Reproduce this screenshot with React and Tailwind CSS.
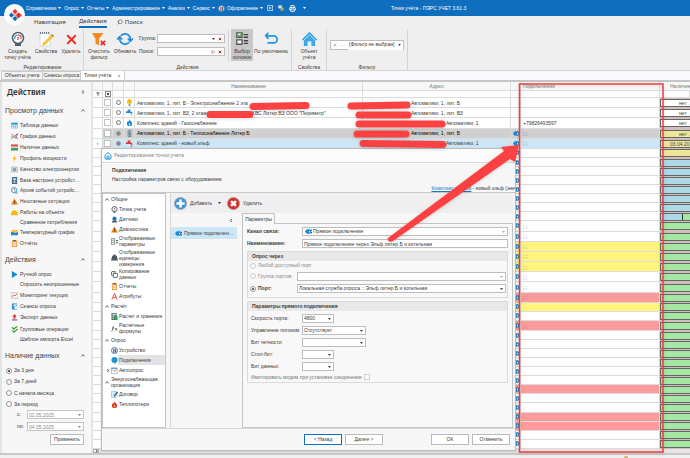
import { Home, Search, Pin, X, RefreshCw, Printer, Filter, Copy } from "lucide-react";

const MENU = ["Справочники", "Опрос", "Отчеты", "Администрирование", "Анализ", "Сервис"];

const DATA_VIEWS = [
  ["table", "Таблица данных"],
  ["graph", "График данных"],
  ["avail", "Наличие данных"],
  ["bolt", "Профиль мощности"],
  ["quality", "Качество электроэнергии"],
  ["device", "База настроек устройст…"],
  ["clock", "Архив событий устройс…"],
  ["warn", "Нештатные ситуации"],
  ["helmet", "Работы на объекте"],
  [null, "Сравнение потребления"],
  ["temp", "Температурный график"],
  ["report", "Отчёты"],
];

const ACTIONS = [
  ["play", "Ручной опрос"],
  [null, "Опросить неопрошенные"],
  ["monitor", "Мониторинг текущих"],
  ["book", "Сеансы опроса"],
  ["export", "Экспорт данных"],
  ["checks", "Групповые операции"],
  [null, "Шаблон импорта Excel"],
];

const PERIODS = ["За 3 дня", "За 7 дней", "С начала месяца", "За период"];

const TREE = [
  { title: "Общие" },
  { icon: "meter", label: "Точка учета" },
  { icon: "sensor", label: "Датчики" },
  { icon: "warn", label: "Диагностика" },
  { icon: "params", label: "Отображаемые параметры", lines: 2 },
  { icon: "weight", label: "Отображаемые единицы измерения", lines: 3 },
  { icon: "copy", label: "Копирование данных", lines: 2 },
  { icon: "report", label: "Отчеты" },
  { icon: "attr", label: "Атрибуты" },
  { title: "Расчёт" },
  { icon: "calc", label: "Расчет и хранение" },
  { icon: "fx", label: "Расчётные формулы", lines: 2 },
  { title: "Опрос" },
  { icon: "gauge", label: "Устройство" },
  { icon: "globe", label: "Подключения", active: true },
  { icon: "auto", label: "Автоопрос", nested: true },
  { title: "Энергоснабжающая организация", lines: 2 },
  { icon: "contract", label: "Договор" },
  { icon: "fire", label: "Теплопотери" },
];

const POINTS = [
  { icon: "bulb", name: "Автоматики, 1, лит. Б - Электроснабжение 2 эта", address: "Автоматики, 1, лит. Б" },
  { icon: "tapBlue", name: "Автоматики, 1, лит. ВЗ, 2 этаж", rest: "ХВС Литер ВЗ ООО \"Периметр\"", address: "Автоматики, 1, лит. ВЗ" },
  { icon: "gas", name: "Комплекс зданий - Газоснабжение", address: "Автоматики, 1", far: true, link: "+79826493597" },
  { icon: "heat", name: "Автоматики, 1, лит. Б - Теплоснабжение Литер Б", address: "Автоматики, 1, лит. Б", link: "; ;", tone: "gray" },
  { icon: "tapRed", name: "Комплекс зданий - новый эльф", address: "Автоматики, 1", far: true, link: "; ;", tone: "blue" },
];

// rows behind the dialog, only their right columns are visible
const HIDDEN_TONES = {
  16: "yellow", 17: "yellow", 18: "yellow", 21: "red", 22: "yellow", 24: "red", 31: "red", 34: "red", 35: "red",
};
const HIDDEN_LINKS = [14, 15, 16, 17, 18, 19, 20, 21, 24];

const ROWS = Array.from({ length: 37 }, (_, i) => {
  const n = i + 1;
  return { n, ...(POINTS[i] || { tone: HIDDEN_TONES[n], link: HIDDEN_LINKS.includes(n) ? "; ;" : "" }) };
});

const TONES = {
  gray: "bg-[#d0d0d0] text-black",
  blue: "bg-[#cce6f6]",
  yellow: "bg-[#fff57d]",
  red: "bg-[#ff9b9b]",
};

function availTone(n) {
  if (n <= 3) return "bg-white";
  if (n <= 6) return "bg-[#eee79a]";
  if (n <= 13) return "bg-[#acd8e8]";
  return "bg-[#a4e8a4]";
}

const GLYPHS = {
  table: <><path fill="#eaf5fc" stroke="#4a9fd4" d="M1 2h14v12H1z" /><path fill="#2196dc" d="M1 2h14v4H1z" /><path stroke="#4a9fd4" d="M1 10h14M6 6v8M10.500 6v8" /></>,
  graph: <><path fill="none" stroke="#e0392e" strokeWidth="2" d="M1 2l6 6 3-3 5 9" /><path fill="none" stroke="#2a8fd0" strokeWidth="2" d="M1 14l5-6 4 4 5-10" /><circle cx="2" cy="8" r="2" fill="#f0a020" /><circle cx="14" cy="3" r="2" fill="#e0392e" /></>,
  avail: <><path fill="#e04848" d="M0 1h16v5H0z" /><path fill="#f3c6c6" d="M0 6h16v3H0z" /><path fill="#3ba55b" d="M0 9h16v6H0z" /></>,
  bolt: <path fill="#fbb914" d="M10 0L3 9h4l-2 7 8-10H9z" />,
  quality: <><path fill="#cfe3ea" stroke="#8aa" d="M1 2h14v12H1z" /><circle cx="8" cy="8" r="4" fill="#63a1b9" /><path stroke="#e6a33c" strokeWidth="2" d="M3 12l9-8" /></>,
  device: <><path fill="#48708d" d="M2 0h12v16H2z" /><path fill="#d8edf7" d="M5 3h6v4H5z" /><circle cx="8" cy="11" r="2" fill="#fff" /></>,
  clock: <><circle cx="7" cy="7" r="6" fill="#e3f3fb" stroke="#2c9ad6" strokeWidth="2" /><path fill="none" stroke="#e0392e" strokeWidth="1.500" d="M7 3v4h3" /><path fill="#6ab4dc" d="M9 10h6v5H9z" /></>,
  warn: <><path fill="#f08019" d="M8 1l8 14H0z" /><path stroke="#5a2a00" strokeWidth="2" d="M8 6v4M8 12v2" /></>,
  helmet: <path fill="#fbb914" d="M0 12c0-6 4-9 8-9s8 3 8 9v2H0z" />,
  temp: <><path fill="#fbc02d" d="M1 2h14v6H1z" /><path fill="#1e88c9" d="M0 8c4-3 6 3 16-1v7H0z" /></>,
  report: <><path fill="#f09327" d="M2 1h12v15H2z" /><path fill="#fff" d="M4 4h8v10H4z" /><path stroke="#e06a2b" strokeWidth="1.500" d="M5 7h6M5 11h6" /><path fill="#556" d="M5 0h6v3H5z" /></>,
  play: <path fill="#1787dc" d="M2 0l13 8-13 8z" />,
  monitor: <><path fill="#fff" stroke="#777" d="M0 2h16v12H0z" /><path fill="none" stroke="#e0392e" strokeWidth="2" d="M2 11l4-4 3 2 5-5" /></>,
  book: <><path fill="#3d93cf" d="M2 1h12v14H2z" /><path fill="#d6ecf8" d="M6 3h7v5H6z" /><circle cx="11" cy="11" r="3" fill="#fff" /></>,
  export: <><path fill="#d43a32" d="M8 0l5 6h-3v5H6V6H3z" /><path fill="#777" d="M2 12h12v3H2z" /></>,
  checks: <path fill="none" stroke="#43a53a" strokeWidth="3" d="M2 3l4 4 8-6M3 10l4 4 8-7" />,
  meter: <><circle cx="8" cy="7" r="6" fill="#e6eef2" stroke="#4d6270" strokeWidth="2" /><path fill="#4d6270" d="M6 13h4v3H6z" /><path stroke="#d33" strokeWidth="1.500" d="M8 8V4" /></>,
  sensor: <><circle cx="8" cy="6" r="5" fill="#2389d0" /><circle cx="8" cy="6" r="2" fill="#1a4a70" /><path fill="#456" d="M2 13l3-3h6l3 3v2H2z" /></>,
  params: <><path fill="none" stroke="#567" strokeWidth="1.500" d="M1 1h7v14H1z" /><path stroke="#43a53a" strokeWidth="1.500" d="M2 5h5M2 10h5" /><path stroke="#333" strokeWidth="2" d="M11 6h5M11 11h5" /></>,
  weight: <path fill="#475763" d="M6 1h4l1 3h2l3 11H0L3 4h2z" />,
  attr: <path fill="none" stroke="#e33" strokeWidth="2" d="M2 15L8 1l6 14M5 10h7" />,
  calc: <><path fill="#5b6c78" d="M1 0h12v16H1z" /><path fill="#d4edd5" d="M3 2h8v3H3z" /><path fill="#35a34a" d="M8 7h7v9H8z" /><path stroke="#fff" strokeWidth="1.500" d="M3 8h4M3 12h4" /></>,
  fx: <path fill="none" stroke="#333" strokeWidth="1.500" d="M1 15c3 0 3-13 6-13M2 7h5M9 7l5 6M14 7l-5 6" />,
  gauge: <><circle cx="8" cy="8" r="7" fill="#e8f3fa" stroke="#2b7fbd" strokeWidth="2" /><path fill="#d8433b" d="M5 4h3v9H5z" /><path fill="#48708d" d="M9 4h3v9H9z" /></>,
  globe: <><circle cx="8" cy="7" r="7" fill="#1e90de" /><path fill="#e9b83b" d="M6 13h4v3H6z" /></>,
  auto: <><path fill="#fff" stroke="#567" d="M1 2h13v13H1z" /><path fill="none" stroke="#d33" strokeWidth="1.500" d="M4 6l4 4 4-5" /><path fill="#2b8bd0" d="M1 2h13v2H1z" /></>,
  contract: <><path fill="#d7ecf8" stroke="#5b9cc4" d="M1 1h11v14H1z" /><path stroke="#2b5f85" strokeWidth="3" d="M15 2L7 12" /></>,
  fire: <><path fill="#d9382b" d="M8 0c1 4 6 6 6 10a6 6 0 0 1-12 0c0-3 2-4 3-6l1 2c1-1 2-3 2-6z" /><path fill="#fbb83a" d="M8 8c2 2 3 3 2 5s-5 1-4-1 2-2 2-4z" /></>,
  bulb: <><path fill="#fbb914" d="M8 0a6 6 0 0 1 3 11H5A6 6 0 0 1 8 0z" /><path fill="#6b7a85" d="M6 12h4v4H6z" /></>,
  tapBlue: <><path fill="#1e88d0" d="M0 5h5V3H3V1h8v2H9v2c4 0 6 2 6 6h-4c0-2-1-2-3-2H0z" /><path fill="#6fc1f0" d="M11 13h3v3h-3z" /></>,
  tapRed: <><path fill="#de3226" d="M0 5h5V3H3V1h8v2H9v2c4 0 6 2 6 6h-4c0-2-1-2-3-2H0z" /><path fill="#de3226" d="M11 13h3v3h-3z" /></>,
  gas: <><path fill="#1787d6" d="M8 0c1 4 6 6 6 10a6 6 0 0 1-12 0c0-3 2-4 3-6l1 2c1-1 2-3 2-6z" /><path fill="#fff" d="M8 9c2 2 2 3 1 5H7c-1-2 0-3 1-5z" /></>,
  heat: <><path fill="#dfe9ee" stroke="#5f7784" strokeWidth="2" d="M5 1h6v14H5z" /><path stroke="#d33" strokeWidth="2" d="M8 4v9" /></>,
  plug: <><path fill="#1787d6" d="M0 8l4-5h8v10H4z" /><path fill="#fff" d="M9 6h2v4H9z" /><path fill="#1c5f92" d="M12 4h4v3h-2v2h2v3h-4z" /></>,
};

function Glyph({ name, className = "size-[7px]" }) {
  return (
    <svg viewBox="0 0 16 16" className={`${className} shrink-0 text-[#455]`} aria-hidden="true">
      {name === "copy" ? <Copy size={16} strokeWidth={3} /> : GLYPHS[name]}
    </svg>
  );
}

function Caret({ className = "" }) {
  return (
    <svg viewBox="0 0 6 4" className={`h-[2px] w-[3px] shrink-0 ${className}`} aria-hidden="true">
      <path fill="currentColor" d="M0 0h6L3 4z" />
    </svg>
  );
}

function Chevron({ className = "" }) {
  return (
    <svg viewBox="0 0 8 6" className={`h-[3px] w-1 shrink-0 ${className}`} aria-hidden="true">
      <path fill="none" stroke="currentColor" strokeWidth="1.500" d="M1 5l3-4 3 4" />
    </svg>
  );
}

function Dropdown({ id, label, value = "", className = "", icon, disabled }) {
  return (
    <div className={`relative h-[9px] border border-[#bdbdbd] bg-white ${className}`}>
      {icon && <Glyph name={icon} className="absolute left-[2px] top-0 size-[7px]" />}
      <select
        id={id}
        aria-label={label}
        disabled={disabled}
        className={`block h-[7px] w-full appearance-none leading-[7px] ${icon ? "pl-[10px]" : "pl-px"}`}
      >
        <option>{value}</option>
      </select>
      <Caret className={`pointer-events-none absolute right-[2px] top-[3px] ${disabled ? "text-[#aaa]" : "text-[#444]"}`} />
    </div>
  );
}

function Radio({ name, label, checked, disabled, className = "" }) {
  return (
    <label className={`flex items-center gap-[2px] ${className}`}>
      <input
        type="radio"
        name={name}
        defaultChecked={checked}
        disabled={disabled}
        className="size-[6px] shrink-0 appearance-none rounded-full border border-[#999] bg-white bg-clip-content p-px checked:bg-[#333] disabled:border-[#ccc]"
      />
      {label}
    </label>
  );
}

function TitleBar() {
  return (
    <header className="flex h-4 shrink-0 items-center bg-[#106ebe] pl-[26px] text-white">
      <div className="absolute left-1 top-1 flex size-[21px] items-center justify-center rounded-full bg-white">
        <svg viewBox="0 0 16 16" className="size-[14px]" aria-label="ПЭРС">
          <path fill="#e2362d" d="M8 1l3 3-3 3-3-3zM12 5l4 3-4 4-3-3 1-1-1-1z" />
          <path fill="#1769b5" d="M4 5l3 3-3 3-3-3z" />
          <path fill="#1769b5" d="M5 12l3-3 3 3-3 3z" />
          <path fill="#e2362d" d="M8 7l1 1-1 1-1-1z" />
        </svg>
      </div>
      <nav className="flex items-center gap-[3px]">
        {MENU.map((item) => (
          <button key={item} className="flex items-center gap-[2px]">
            {item}
            <Caret />
          </button>
        ))}
        <button className="flex items-center gap-[2px]">
          <Glyph name="gauge" />
          Оформление
          <Caret />
        </button>
      </nav>
      <div className="ml-1 flex items-center gap-[5px]">
        <button aria-label="Закрыть окна" className="flex size-[6px] items-center justify-center border border-[#9cc6ea]">
          <X size={4} strokeWidth={4} />
        </button>
        <button aria-label="Окна">
          <svg viewBox="0 0 16 16" className="size-[6px]">
            <path fill="#dceaf6" d="M1 1h9v8H1z" />
            <path fill="#f0b23c" d="M7 7h8v8H7z" />
            <path fill="#4caf50" d="M9 9h4v4H9z" />
          </svg>
        </button>
        <button aria-label="Печать"><Printer size={7} strokeWidth={3} /></button>
        <Caret className="ml-[2px]" />
      </div>
      <h1 className="ml-[85px] whitespace-nowrap">Точки учёта - ПЭРС УЧЕТ 3.61.3</h1>
    </header>
  );
}

function RibbonButton({ label, className = "", children }) {
  return (
    <button className={`flex h-8 flex-col items-center gap-px pt-[2px] leading-[6px] ${className}`}>
      <span className="flex h-4 items-center">{children}</span>
      <span>{label}</span>
    </button>
  );
}

function RibbonGroup({ title, className = "", children }) {
  return (
    <section className={`flex flex-col justify-between border-r border-[#d4d4d4] ${className}`}>
      <div className="flex">{children}</div>
      <h2 className="text-center">{title}</h2>
    </section>
  );
}

function SearchField({ label, id, children }) {
  return (
    <div className="flex items-center">
      <label htmlFor={id} className="w-[18px]">{label}</label>
      <div className="flex h-[9px] w-[68px] items-center gap-[3px] border border-[#bdbdbd] bg-white pr-[2px]">
        <input id={id} className="h-[7px] min-w-0 flex-1 outline-none" />
        {children}
        <X size={4} strokeWidth={5} className="text-red-600" />
      </div>
    </div>
  );
}

function Ribbon() {
  return (
    <div className="h-[55px] shrink-0 border-b border-[#d5d5d5] bg-[#efefef]">
      <nav className="flex h-3 items-center pl-[34px] font-['Noto_Sans',sans-serif] text-[6px]">
        <button className="w-[45px] text-left">Навигация</button>
        <button className="flex h-full items-center border-b-2 border-[#106ebe]">Действия</button>
        <button className="ml-[10px] flex items-center gap-[2px]">
          <Search size={6} className="-scale-x-100" />
          Поиск
        </button>
      </nav>
      <div className="flex h-[42px] pt-px">
        <RibbonGroup title="Редактирование" className="w-[84px] pl-[2px]">
          <RibbonButton label={<>Создать<br />точку учёта</>} className="w-[31px]">
            <svg viewBox="0 0 16 16" className="size-4">
              <circle cx="8" cy="7" r="5.500" fill="#fff" stroke="#4e5f69" strokeWidth="1.500" />
              <path fill="#4e5f69" d="M5 12h6v3H5z" />
              <path fill="none" stroke="#2b95d5" strokeWidth="1.200" d="M5 8a3 3 0 0 1 3-4" />
              <path fill="none" stroke="#df3a30" strokeWidth="1.200" d="M8 4a3 3 0 0 1 3 4M8 6v3" />
            </svg>
          </RibbonButton>
          <RibbonButton label="Свойства" className="w-[26px]">
            <svg viewBox="0 0 16 16" className="size-4">
              <path fill="#fff" stroke="#aebcc5" strokeWidth=".5" d="M2 2h10v13H2z" />
              <path stroke="#63818f" strokeDasharray="1 1" strokeWidth="2" d="M2 2h10" />
              <path fill="#fbc02d" d="M13 4l2 2-8 8-3 1 1-3z" />
              <path fill="#d46a2b" d="M13 4l1-1 2 2-1 1z" />
            </svg>
          </RibbonButton>
          <RibbonButton label="Удалить" className="w-[24px]">
            <X size={15} strokeWidth={3} className="text-[#ee2e24]" />
          </RibbonButton>
        </RibbonGroup>
        <RibbonGroup title="Действия" className="w-[208px]">
          <RibbonButton label={<>Очистить<br />фильтр</>} className="ml-[2px] w-[26px]">
            <svg viewBox="0 0 16 16" className="size-[14px]">
              <path fill="#f58a1f" d="M0 1h13L8 8v7l-4-2V8z" />
              <path stroke="#e8292a" strokeWidth="2" d="M10 10l5 5M15 10l-5 5" />
            </svg>
          </RibbonButton>
          <RibbonButton label="Обновить" className="w-[26px]">
            <RefreshCw size={14} strokeWidth={3} className="rotate-45 text-[#1b8be0]" />
          </RibbonButton>
          <div className="flex flex-col gap-[4px] border-r border-[#d4d4d4] pl-[1px] pr-[3px] pt-[5px]">
            <SearchField id="group" label="Группа:"><Caret /></SearchField>
            <SearchField id="search" label="Поиск:"><Search size={4} className="-scale-x-100" /></SearchField>
          </div>
          <RibbonButton label={<>Выбор<br />колонок</>} className="ml-[2px] w-[22px] bg-[#c8c8c8]">
            <svg viewBox="0 0 16 16" className="size-[14px]">
              <path fill="#fff" stroke="#555" strokeWidth="1.500" d="M2 1h6v5H2zM2 9h6v5H2z" />
              <path fill="none" stroke="#36a33b" strokeWidth="1.500" d="M3 3l2 2 4-4" />
              <path stroke="#444" strokeWidth="1.500" d="M10 3h5M10 6h5M10 10h5M10 13h5" />
            </svg>
          </RibbonButton>
          <RibbonButton label="По умолчанию" className="w-[36px] whitespace-nowrap">
            <svg viewBox="0 0 16 16" className="size-[14px]">
              <path fill="none" stroke="#2196e0" strokeWidth="2" d="M5 1L2 4l3 4M2 4.500h9a3.500 3.500 0 0 1 0 8H4" />
            </svg>
          </RibbonButton>
        </RibbonGroup>
        <RibbonGroup title="Свойства" className="w-[35px]">
          <RibbonButton label={<>Объект<br />учёта</>} className="w-full">
            <svg viewBox="0 0 16 16" className="size-[15px]">
              <path fill="#1f9be6" d="M8 0l8 8-1 1-7-7-7 7-1-1z" />
              <path fill="#3fa9ea" d="M8 3l6 6v6H2V9z" />
              <path fill="#e6f4fc" d="M6 10h4v5H6z" />
            </svg>
          </RibbonButton>
        </RibbonGroup>
        <RibbonGroup title="Фильтр" className="w-[81px]">
          <div className="mx-[3px] mt-[11px] flex h-[10px] flex-1 items-center border border-[#bdbdbd] bg-white pl-[2px]">
            <X size={4} />
            <span className="px-[3px] text-[#999]">···</span>
            <Dropdown label="Фильтр" value="[Фильтр не выбран]" className="h-2 flex-1 border-0" />
          </div>
        </RibbonGroup>
      </div>
    </div>
  );
}

function PageTabs() {
  return (
    <nav className="flex h-[11px] shrink-0 items-end border-b-2 border-[#c6c6c6] bg-[#f9f9fb] pl-px">
      <button className="h-[9px] w-[42px] border border-[#ccc] bg-[#f2f2f2]">Объекты учета</button>
      <button className="h-[9px] w-[38px] border border-l-0 border-[#ccc] bg-[#f2f2f2]">Сеансы опроса</button>
      <button className="flex h-[9px] w-[44px] items-center justify-between border-r border-[#ccc] bg-white px-[3px]">
        Точки учёта
        <X size={4} />
      </button>
    </nav>
  );
}

function PanelHeading({ children }) {
  return (
    <h3 className="flex h-3 items-center justify-between pl-[3px] pr-[6px] text-[7px] text-[#444]">
      {children}
      <Chevron />
    </h3>
  );
}

function LinkList({ items, className }) {
  return (
    <ul className={`grid pl-[9px] ${className}`}>
      {items.map(([icon, label]) => (
        <li key={label} className="flex items-center">
          <a href="#" className="flex items-center gap-[2px] whitespace-nowrap">
            {icon ? <Glyph name={icon} /> : <span className="w-[7px]" />}
            {label}
          </a>
        </li>
      ))}
    </ul>
  );
}

function DateField({ id, label, value }) {
  return (
    <div className="flex items-center">
      <label htmlFor={id} className="w-[10px]">{label}</label>
      <div className="flex h-[9px] min-w-0 flex-1 items-center border border-[#c4c4c4] bg-white pr-[2px] text-[#888]">
        <input id={id} disabled defaultValue={value} className="h-[7px] min-w-0 flex-1 pl-px" />
        <Caret />
      </div>
    </div>
  );
}

function ActionsPanel() {
  return (
    <aside className="flex w-[93px] shrink-0 flex-col border-l-2 border-r-2 border-[#e4e4e4] bg-[#f7f7f7]">
      <div className="flex h-[22px] items-center justify-between pb-[3px] pl-[5px] pr-[6px]">
        <h2 className="font-['Noto_Sans',sans-serif] text-[8px] font-semibold text-[#333]">Действия</h2>
        <Pin size={4} />
      </div>
      <PanelHeading>Просмотр данных</PanelHeading>
      <LinkList items={DATA_VIEWS} className="mt-[4px] h-[129px]" />
      <div className="mt-[4px]">
        <PanelHeading>Действия</PanelHeading>
      </div>
      <LinkList items={ACTIONS} className="mt-[4px] h-[75px]" />
      <div className="mt-[5px]">
        <PanelHeading>Наличие данных</PanelHeading>
      </div>
      <div className="mt-[4px] grid h-[45px] pl-[4px]">
        {PERIODS.map((period, i) => (
          <Radio key={period} name="period" label={period} checked={i === 0} />
        ))}
      </div>
      <div className="flex flex-col items-end gap-[3px] pl-[15px] pr-[7px]">
        <div className="flex w-full flex-col gap-[3px]">
          <DateField id="from" label="с:" value="02.05.2025" />
          <DateField id="to" label="по:" value="04.05.2025" />
        </div>
        <button className="h-[11px] w-[34px] border border-[#bbb] bg-white">Применить</button>
      </div>
    </aside>
  );
}

function PointsTable() {
  const cell = "overflow-hidden whitespace-nowrap border-b border-r border-[#dcdcdc] p-0";
  return (
    <table className="h-full w-full table-fixed border-separate border-spacing-0 bg-white leading-[8px]">
      <colgroup>
        <col className="w-[10px]" />
        <col className="w-[10px]" />
        <col className="w-[11px]" />
        <col className="w-[11px]" />
        <col />
        <col className="w-[148px]" />
        <col className="w-[10px]" />
        <col className="w-[139px]" />
        <col className="w-[30px]" />
      </colgroup>
      <thead className="text-[#777]">
        <tr className="bg-[#f8f8f8]">
          {["", "", "", "", "Наименование", "Адрес", "", "Подключения", "Наличие"].map((title, i) => (
            <th key={i} className={`${cell} border-[#c8c8c8] font-normal ${i === 7 ? "pl-[2px] text-left" : ""} ${i === 8 ? "border-r-0 pl-[10px] text-left" : ""}`}>
              {title}
            </th>
          ))}
        </tr>
        <tr>
          {Array.from({ length: 9 }, (_, i) => (
            <td key={i} className={cell}>
              {i === 0 && <Filter size={4} fill="currentColor" className="mx-auto" />}
              {i === 1 && (
                <input type="checkbox" aria-label="Выбрать все" defaultChecked className="mx-auto block size-[6px] appearance-none border border-[#888] bg-[#444] bg-clip-content p-px" />
              )}
            </td>
          ))}
        </tr>
      </thead>
      <tbody>
        {ROWS.map((row) => (
          <tr key={row.n} className={TONES[row.tone]}>
            <td className={`${cell} bg-white text-center`}>{row.tone === "blue" ? "›" : ""}</td>
            <td className={cell}>
              {row.name && <input type="checkbox" aria-label={row.name} className="mx-auto block size-[7px] appearance-none border border-[#c2c2c2] bg-white" />}
            </td>
            <td className={cell}>
              {row.name && <span className={`mx-auto block size-[5px] rounded-full border ${row.link === "; ;" ? "border-[#999] bg-[#888]" : "border-[#777] bg-white"}`} />}
            </td>
            <td className={cell}>{row.icon && <Glyph name={row.icon} className="mx-auto block size-[7px]" />}</td>
            <td className={`${cell} pl-[2px]`}>
              {row.name}
              {row.rest && <span className="pl-[45px]">{row.rest}</span>}
            </td>
            <td className={`${cell} ${row.far ? "pl-[83px]" : "pl-[48px]"}`}>{row.address}</td>
            <td className={cell}>{row.n > 3 && <Glyph name="plug" className="ml-[2px] block size-[7px]" />}</td>
            <td className={`${cell} pl-[2px]`}>{row.link}</td>
            <td className="bg-[#cfc0bd] p-0">
              <div className={`flex h-2 border border-r-0 border-[#666] leading-[6px] text-[#444] ${availTone(row.n)}`}>
                {row.n < 5 && <span className="pl-[18px]">нет .</span>}
                {row.n === 5 && <span className="pl-[9px]">03.04.20</span>}
                {row.n === 13 && <span className="ml-[21px] flex-1 border-l border-[#333] bg-[#a4e8a4]" />}
              </div>
            </td>
          </tr>
        ))}
      </tbody>
    </table>
  );
}

function TreeItem({ item }) {
  const height = { 2: "h-[14px]", 3: "h-[19px]" }[item.lines] || "h-[10px]";
  if (item.title) {
    return (
      <li className={`flex items-center gap-[2px] pl-[2px] leading-[6px] ${height}`}>
        <Chevron />
        <span className={item.lines ? "" : "whitespace-nowrap"}>{item.title}</span>
      </li>
    );
  }
  return (
    <li className={`flex items-center leading-[6px] ${height}`}>
      <span className="w-[8px] pl-[3px]">{item.nested && <Chevron className="rotate-90" />}</span>
      <Glyph name={item.icon} />
      <a
        href="#"
        className={`flex h-full min-w-0 flex-1 items-center pl-px ${item.lines ? "" : "whitespace-nowrap"} ${item.active ? "bg-[#e3e3e3]" : ""}`}
      >
        {item.label}
      </a>
    </li>
  );
}

function GroupBox({ title, children }) {
  return (
    <fieldset className="border border-[#dadada]">
      <h4 className="flex h-[9px] items-center bg-[#e8e8e8] pl-[4px] font-bold">{title}</h4>
      {children}
    </fieldset>
  );
}

const PORT_FIELDS = [
  ["speed", "Скорость порта:", "4800", "w-8"],
  ["flow", "Управление потоком:", "Отсутствует", "w-16"],
  ["parity", "Бит четности:", "", "w-16"],
  ["stop", "Стоп-бит:", "", "w-8"],
  ["bits", "Бит данных:", "", "w-8"],
];

function ConnectionForm() {
  return (
    <div className="flex min-w-0 flex-1 flex-col">
      <div className="h-[10px]">
        <button className="relative z-10 h-[11px] w-[33px] border border-b-0 border-[#c4c4c4] bg-[#f8f8f8]">Параметры</button>
      </div>
      <div className="flex flex-1 flex-col gap-[3px] border border-[#c4c4c4] bg-[#f8f8f8] px-[4px] pt-[3px]">
        <div className="flex items-center">
          <label htmlFor="channel" className="w-[55px] font-bold">Канал связи:</label>
          <Dropdown id="channel" value="Прямое подключение" icon="plug" disabled className="flex-1" />
        </div>
        <div className="flex items-center">
          <label htmlFor="name" className="w-[55px] font-bold">Наименование:</label>
          <input id="name" defaultValue="Прямое подключение через Эльф литер Б и котельная" className="h-[9px] flex-1 border border-[#bdbdbd] bg-white pl-px" />
        </div>
        <GroupBox title="Опрос через">
          <div className="grid h-[36px] pb-[2px] pl-[2px] pr-px">
            <Radio name="via" label="Любой доступный порт" disabled className="text-[#888]" />
            <div className="flex items-center">
              <Radio name="via" label="Группа портов:" disabled className="w-[47px] text-[#888]" />
              <Dropdown label="Группа портов" disabled className="flex-1" />
            </div>
            <div className="flex items-center">
              <Radio name="via" label="Порт:" checked className="w-[47px] font-bold" />
              <Dropdown label="Порт" value="Локальная служба опроса :: Эльф литер Б и котельная" className="flex-1" />
            </div>
          </div>
        </GroupBox>
        <GroupBox title="Параметры прямого подключения">
          <div className="grid h-[61px] pl-[3px] pt-[2px]">
            {PORT_FIELDS.map(([id, label, value, width]) => (
              <div key={id} className="flex items-center">
                <label htmlFor={id} className="w-[51px] whitespace-nowrap">{label}</label>
                <Dropdown id={id} value={value} className={width} />
              </div>
            ))}
          </div>
          <label className="flex h-[10px] items-center gap-[3px] pl-[3px] text-[#777]">
            Имитировать модем при установке соединения
            <input type="checkbox" disabled className="size-[6px] appearance-none border border-[#d0d0d0] bg-white" />
          </label>
        </GroupBox>
      </div>
    </div>
  );
}

function EditDialog() {
  const button = "h-[11px] w-[38px] border bg-white";
  return (
    <div role="dialog" aria-label="Редактирование точки учета" className="absolute bottom-[2px] left-2 right-[174px] top-[66px] flex flex-col border border-[#bcbcbc] bg-[#f7f7f7] shadow">
      <div className="flex h-[14px] shrink-0 items-center gap-[2px] border-b border-[#dcdcdc] bg-[#fbfbfb] pl-[2px] font-['Noto_Sans',sans-serif] text-[#888]">
        <Home size={8} strokeWidth={3} className="text-[#2196e0]" />
        Редактирование точки учета
      </div>
      <div className="relative flex h-[30px] shrink-0 flex-col gap-[4px] border-b border-[#c8c8c8] pl-[10px] pt-[5px]">
        <h3 className="font-bold">Подключения</h3>
        <p>Настройка параметров связи с оборудованием</p>
        <p className="absolute bottom-px right-0 whitespace-nowrap">
          <a href="#" className="text-[#1a79c4] underline">Комплекс зданий</a> - новый эльф (эне
        </p>
      </div>
      <div className="flex flex-1">
        <ul className="w-[64px] shrink-0 border border-[#c4c4c4] bg-white">
          {TREE.map((item) => <TreeItem key={item.label || item.title} item={item} />)}
        </ul>
        <div className="ml-[4px] mr-[2px] flex min-w-0 flex-1 flex-col border-l border-[#d8d8d8]">
          <div className="flex h-5 shrink-0 items-center bg-[#efefef] pl-[3px]">
            <button className="flex items-center gap-[3px]">
              <svg viewBox="0 0 16 16" className="size-[13px]">
                <circle cx="8" cy="8" r="7.500" fill="#4594d2" stroke="#98a9b8" />
                <path stroke="#fff" strokeWidth="3" d="M8 3v10M3 8h10" />
              </svg>
              Добавить
            </button>
            <Caret className="ml-[6px]" />
            <button className="ml-[6px] flex items-center gap-[3px]">
              <svg viewBox="0 0 16 16" className="size-[13px]">
                <circle cx="8" cy="8" r="7.500" fill="#d32f2c" stroke="#b39a9a" />
                <path stroke="#fff" strokeWidth="3" d="M5 5l6 6M11 5l-6 6" />
              </svg>
              Удалить
            </button>
          </div>
          <div className="flex flex-1">
            <div className="w-[71px] shrink-0">
              <div className="flex h-[14px] items-center justify-end pr-[9px]"><Chevron className="-rotate-90" /></div>
              <button className="flex h-3 w-[66px] items-center gap-[2px] bg-[#cce6f6] pl-[4px]">
                <Glyph name="plug" />
                Прямое подключен…
              </button>
            </div>
            <ConnectionForm />
          </div>
        </div>
      </div>
      <div className="flex h-[22px] shrink-0 items-center gap-[3px] border-t border-[#d8d8d8] pl-[202px] pr-[5px]">
        <button className={`${button} border-[#106ebe]`}>&lt; Назад</button>
        <button className={`${button} border-[#bbb]`}>Далее &gt;</button>
        <button className={`${button} ml-auto border-[#bbb]`}>ОК</button>
        <button className={`${button} border-[#bbb]`}>Отменить</button>
      </div>
    </div>
  );
}

// red marks drawn over the window: hidden data, the frame and the arrow
function Markup() {
  return (
    <svg viewBox="0 0 690 458" className="pointer-events-none absolute left-0 top-0 h-[458px] w-[690px] drop-shadow" aria-hidden="true">
      <g stroke="#fb4141" strokeWidth="7" strokeLinecap="round">
        <path d="M253 106.500L306 105.500M210 114.500h40M351 106l56-1M359 115h49M359 124h83M357 134h49M363 143.500l80 1" />
      </g>
      <path fill="none" stroke="#f23a3a" strokeWidth="1.500" d="M519.500 84H663v368H519.500z" />
      <path fill="#fb4141" d="M388 238c-1 3 2 5 5 3l117-82 5 3 4-17-18 2 3 4z" />
    </svg>
  );
}

export default function App() {
  return (
    <div className="relative flex h-screen flex-col overflow-hidden bg-[#eee] font-['Liberation_Sans',sans-serif] text-[5px] leading-none text-[#3a3a3a]">
      <TitleBar />
      <Ribbon />
      <PageTabs />
      <main className="flex min-h-0 flex-1">
        <ActionsPanel />
        <div className="relative flex min-w-0 flex-1 flex-col overflow-hidden">
          <div className="min-h-0 flex-1">
            <PointsTable />
          </div>
          <div className="flex h-1 shrink-0 bg-[#e6e6e6]">
            <button aria-label="Прокрутить влево" className="flex w-[6px] items-center justify-center border border-[#aaa] bg-white">
              <Caret className="rotate-90" />
            </button>
          </div>
          <EditDialog />
        </div>
      </main>
      <footer className="flex h-[5px] shrink-0 items-center justify-end border-t-2 border-[#c9c9c9] bg-[#f0f0f0] pr-[62px]">
        <span className="h-[2px] w-[4px] rounded-t bg-[#d9a860]" />
      </footer>
      <Markup />
    </div>
  );
}
